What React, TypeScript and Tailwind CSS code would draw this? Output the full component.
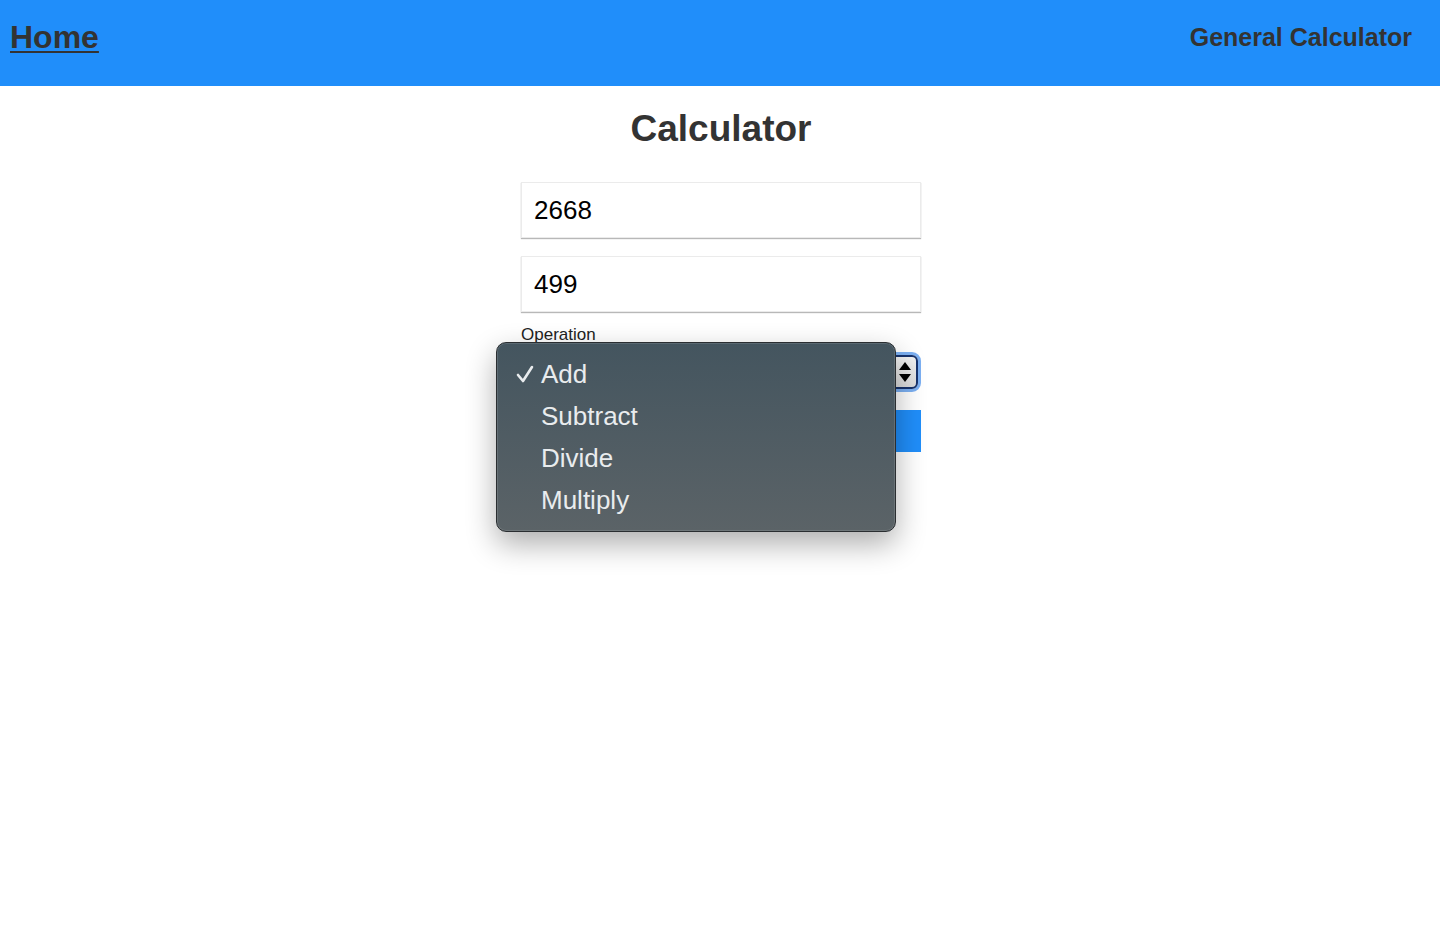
import React from "react";

export default function App() {
  const sans = { fontFamily: '"Liberation Sans", Arial, sans-serif' };
  return (
    <div className="min-h-[930px] bg-white" style={sans}>
      <header className="h-[86px] bg-[#208efa] flex items-center justify-between pl-[10px] pr-[28px] pb-[12px]">
        <a className="text-[32px] leading-none font-bold text-[#333333] underline decoration-[2px] underline-offset-[3px]">
          Home
        </a>
        <span className="text-[25px] leading-none font-bold text-[#333333]">General Calculator</span>
      </header>

      <main className="flex flex-col items-center pl-[2px]">
        <h1 className="mt-[24px] text-[37px] leading-none font-bold text-[#333333]">Calculator</h1>

        <div className="w-[400px] mt-[35px] flex flex-col">
          <div className="h-[56px] border border-[#ebebeb] shadow-[0_1px_1px_rgba(0,0,0,0.28)] flex items-center px-[12px] text-[26px] leading-none text-black">
            2668
          </div>
          <div className="mt-[18px] h-[56px] border border-[#ebebeb] shadow-[0_1px_1px_rgba(0,0,0,0.28)] flex items-center px-[12px] text-[26px] leading-none text-black">
            499
          </div>

          <label className="mt-[14px] text-[17px] leading-none text-[#222222]">Operation</label>

          <div className="relative mt-[9px]">
            <div className="h-[40px] rounded-[9px] border-[3px] border-[#7cb0f2]">
              <div className="h-full rounded-[6px] border-[2px] border-[#17336d] bg-gradient-to-b from-[#f2f2f2] to-[#dcdcdc] flex items-center justify-end pr-[4px]">
                <svg width="14" height="24" viewBox="0 0 14 24">
                  <path d="M7 2 L13 10 L1 10 Z" fill="#000" />
                  <path d="M1 14 L13 14 L7 22 Z" fill="#000" />
                </svg>
              </div>
            </div>

            <div className="absolute -left-[25px] -top-[10px] w-[400px] z-10 rounded-[10px] border border-[#2a2e31] bg-gradient-to-b from-[#44555f] to-[#5b6367] shadow-[0_12px_30px_rgba(0,0,0,0.32),inset_0_0_0_1px_rgba(255,255,255,0.12)] py-[10px]">
              {["Add", "Subtract", "Divide", "Multiply"].map((o, i) => (
                <div key={o} className="h-[42px] flex items-center text-[26px] leading-none text-[#e9ecee]">
                  <span className="w-[44px] pl-[19px] flex items-center">
                    {i === 0 && (
                      <svg width="18" height="18" viewBox="0 0 18 18">
                        <path d="M2 10 L7 16 L16 2" fill="none" stroke="#e9ecee" strokeWidth="2.6" strokeLinecap="round" strokeLinejoin="round" />
                      </svg>
                    )}
                  </span>
                  <span>{o}</span>
                </div>
              ))}
            </div>
          </div>

          <button className="mt-[18px] h-[42px] bg-[#208efa] text-white text-[18px]">Calculate</button>
        </div>
      </main>
    </div>
  );
}
